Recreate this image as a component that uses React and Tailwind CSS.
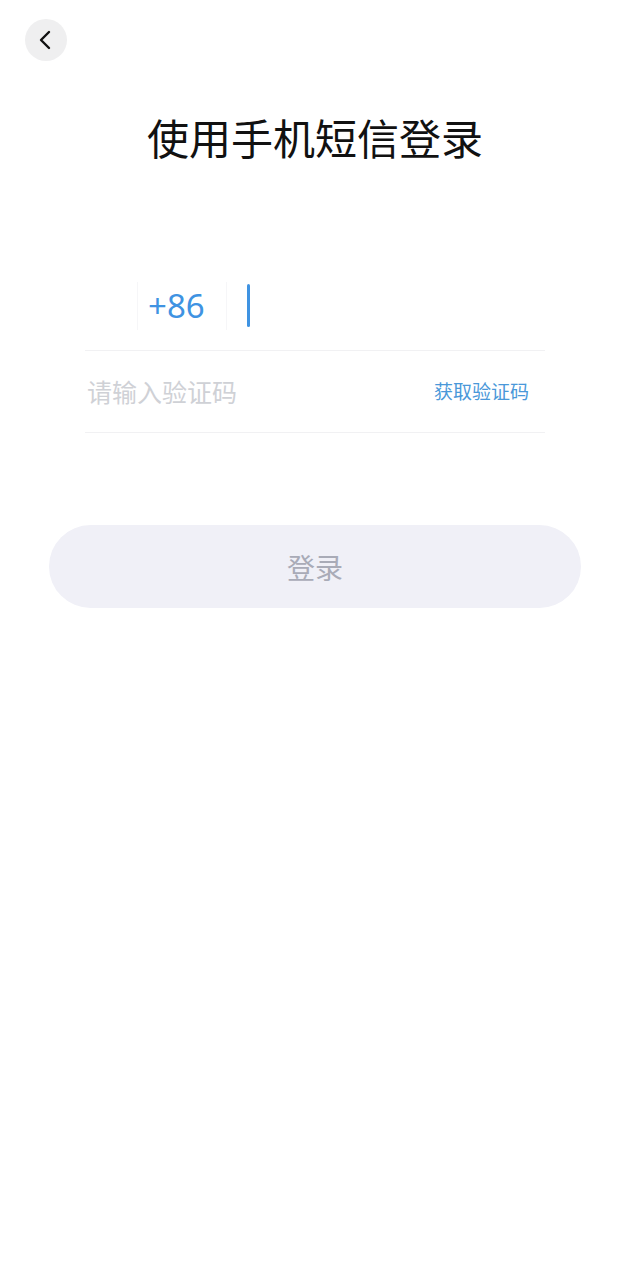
const cjk = { fontFamily: '"Noto Sans CJK SC", "Noto Sans", sans-serif' };

function BackIcon() {
  return (
    <svg width="14" height="20" viewBox="0 0 14 20" fill="none">
      <path
        d="M11 2 L3 10 L11 18"
        stroke="#111"
        strokeWidth="2.4"
        strokeLinecap="round"
        strokeLinejoin="round"
      />
    </svg>
  );
}

export default function App() {
  return (
    <div className="min-h-[1280px] w-full bg-white" style={cjk}>
      {/* Back */}
      <div className="pl-[25px] pt-[19px]">
        <button className="flex h-[42px] w-[42px] items-center justify-center rounded-full bg-[#efeff0] pr-[2px]">
          <BackIcon />
        </button>
      </div>

      {/* Title */}
      <h1 className="mt-[48px] text-center text-[42px] leading-[56px] text-[#111]">
        使用手机短信登录
      </h1>

      {/* Form */}
      <div className="mx-auto mt-[96px] w-[460px]">
        <div className="flex h-[90px] items-center border-b border-[#f1f1f3] pl-[52px]">
          <div className="flex h-[48px] w-[90px] items-center border-x border-[#f6f6f8] pl-[10px]">
            <span
              className="text-[33px] leading-none text-[#3f93e2]"
              style={{ fontFamily: '"Noto Sans", sans-serif' }}
            >
              +86
            </span>
          </div>
          <div className="ml-[20px] h-[43px] w-[3px] rounded-sm bg-[#3f93e2]" />
        </div>

        <div className="flex h-[82px] items-center justify-between border-b border-[#f1f1f3] pl-[2px] pr-[16px]">
          <span className="text-[25px] text-[#cfd1d6]">请输入验证码</span>
          <span className="text-[19px] text-[#4a98d9]">获取验证码</span>
        </div>
      </div>

      {/* Login */}
      <div className="mt-[92px] px-[49px]">
        <button className="flex h-[83px] w-full items-center justify-center rounded-full bg-[#f0f0f7] text-[28px] text-[#a9abb7]">
          登录
        </button>
      </div>
    </div>
  );
}
